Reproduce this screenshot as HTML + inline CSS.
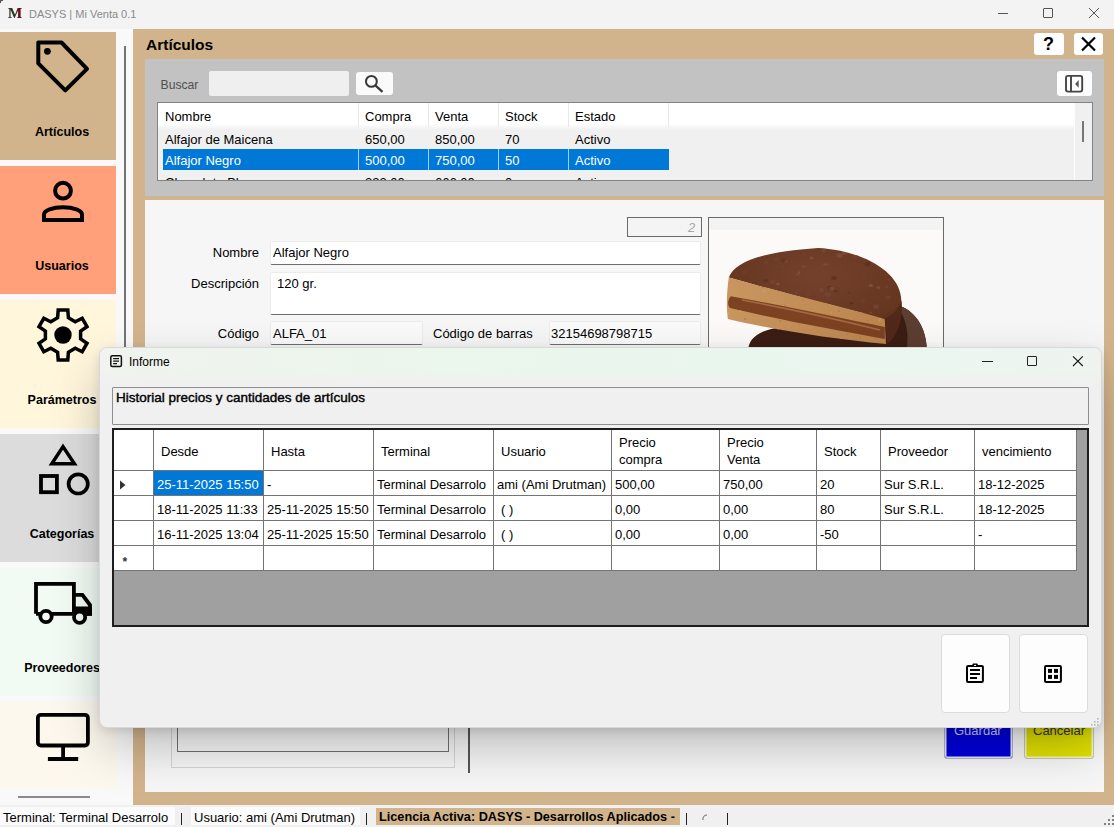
<!DOCTYPE html>
<html><head><meta charset="utf-8">
<style>
*{margin:0;padding:0;box-sizing:border-box}
html,body{width:1114px;height:827px;overflow:hidden;background:#f3f3f3;font-family:"Liberation Sans",sans-serif;font-size:13px;color:#000}
.a{position:absolute}
.t{position:absolute;white-space:nowrap;line-height:1}
.tile{position:absolute;left:0;width:116px;height:128px}
.tile .lbl{position:absolute;left:0;width:124px;text-align:center;top:93px;font-weight:bold;font-size:12.5px;white-space:nowrap}
.tile svg{position:absolute}
</style></head><body>
<div class="a" style="left:0;top:0;width:1114px;height:827px;overflow:hidden">

<!-- title bar -->
<div class="a" style="left:0;top:0;width:3px;height:3px;background:radial-gradient(circle at 100% 100%,#0000 2px,#555 2.5px);z-index:5"></div>
<div class="a" style="left:0;top:0;width:1114px;height:29px;background:#f3f3f3"></div>
<svg class="a" style="left:7px;top:6px" width="16" height="14" viewBox="7 6 16 14"><defs><linearGradient id="mg" x1="0" x2="1"><stop offset="0" stop-color="#4a3a38"/><stop offset="0.2" stop-color="#2a3a2a"/><stop offset="0.55" stop-color="#1c3a20"/><stop offset="0.6" stop-color="#6a1a22"/><stop offset="1" stop-color="#5a0f18"/></linearGradient></defs><path d="M8.3 8H12.2L15 14.8L17.6 8H21.6V8.7L20.6 9V16.9L21.6 17.3V18H17.2V17.3L18.1 16.9V10.6L14.6 18H14.1L10.6 9.8V16.9L11.6 17.3V18H8.3V17.3L9.3 16.9V9L8.3 8.7Z" fill="url(#mg)"/></svg>
<div class="t" style="left:29px;top:9px;font-size:11px;color:#8a8a8a">DASYS | Mi Venta 0.1</div>
<div class="a" style="left:998px;top:13px;width:10px;height:1px;background:#555"></div>
<div class="a" style="left:1043px;top:8px;width:10px;height:10px;border:1px solid #555;border-radius:1px"></div>
<svg class="a" style="left:1088px;top:7px" width="12" height="12" viewBox="0 0 12 12"><path d="M1 1L11 11M11 1L1 11" stroke="#555" stroke-width="1"/></svg>

<!-- sidebar -->
<div class="a" style="left:0;top:29px;width:133px;height:776px;background:#f9f9f9"></div>
<div class="tile" style="top:32px;background:#d2b48c">
  <div class="lbl">Artículos</div>
</div>
<div class="tile" style="top:166px;background:#ffa07a">
  <div class="lbl">Usuarios</div>
</div>
<div class="tile" style="top:300px;background:#fff6dc">
  <div class="lbl">Parámetros</div>
</div>
<div class="tile" style="top:434px;background:#dcdcdc">
  <div class="lbl">Categorías</div>
</div>
<div class="tile" style="top:568px;background:#f1fbf4">
  <div class="lbl">Proveedores</div>
</div>
<div class="tile" style="top:702px;height:86px;background:#fdf8ee">
</div>
<svg class="a" style="left:0;top:0" width="124" height="805" viewBox="0 0 124 805">
<g fill="none" stroke="#000" stroke-width="3.6">
 <path d="M38.3 42.5H61.5L87 68.8L65.3 90.4L38.3 63.4Z" stroke-linejoin="round" stroke-width="4"/>
 <circle cx="63" cy="190.7" r="7.9" stroke-width="4"/>
 <path d="M44 220V214.5A19 7.3 0 0 1 82 214.5V220Z" stroke-width="4"/>
 <path transform="translate(37 308)" d="M20.6 9.8 L21.2 2.1 L30.8 2.1 L31.4 9.8 L38.2 13.7 L45.2 10.3 L50.0 18.7 L43.6 23.1 L43.6 30.9 L50.0 35.3 L45.2 43.7 L38.2 40.3 L31.4 44.2 L30.8 51.9 L21.2 51.9 L20.6 44.2 L13.8 40.3 L6.8 43.7 L2.0 35.3 L8.4 30.9 L8.4 23.1 L2.0 18.7 L6.8 10.3 L13.8 13.7 Z" stroke-width="3.5" stroke-linejoin="miter"/>
 <path d="M63 446.6L51.8 463.8H74.4Z" stroke-width="3.5"/>
 <rect x="41" y="476" width="15.9" height="16.2" stroke-width="3.8"/>
 <circle cx="78.2" cy="483.9" r="9.6" stroke-width="3.7"/>
 <path d="M36 613.8V583.9H73.9V613.8M36 613.8H41M51 613.8H73.9" stroke-width="3.8"/>
 <path d="M73.9 594.8H82.4L90 605V613.8H86" stroke-width="3.8"/>
 <rect x="37.9" y="714.8" width="50" height="30.7" rx="3" stroke-width="3.8"/>
 <path d="M63.1 747V758M47.9 759H78.2" stroke-width="3.8"/>
</g>
<circle cx="47.4" cy="51.3" r="3.4"/>
<circle cx="63" cy="335" r="8.7"/>
<rect x="73.9" y="606.5" width="18" height="9.2"/>
<circle cx="46" cy="616.5" r="5.7" fill="#f1fbf4" stroke="#000" stroke-width="3.8"/>
<circle cx="79.6" cy="617.3" r="5.6" fill="#f1fbf4" stroke="#000" stroke-width="3.8"/>
</svg>
<div class="a" style="left:18px;top:796px;width:72px;height:2px;background:#8a8a8a"></div>
<div class="a" style="left:124px;top:46px;width:2px;height:660px;background:#747474"></div>

<!-- content panel -->
<div class="a" style="left:133px;top:29px;width:981px;height:776px;background:#d2b48c"></div>
<div class="t" style="left:146px;top:37px;font-size:15.5px;font-weight:bold">Artículos</div>
<div class="a" style="left:1034px;top:33px;width:30px;height:22px;background:#fff;border-radius:3px"></div>
<div class="t" style="left:1043px;top:35px;font-size:18px;font-weight:bold">?</div>
<div class="a" style="left:1074px;top:33px;width:29px;height:22px;background:#fff;border-radius:3px"></div>
<svg class="a" style="left:1080px;top:36px" width="17" height="16" viewBox="0 0 17 16"><path d="M2 1.5L15 14.5M15 1.5L2 14.5" stroke="#000" stroke-width="2.2"/></svg>

<!-- gray search panel -->
<div class="a" style="left:145px;top:59px;width:959px;height:137px;background:#c1c2c1"></div>
<div class="t" style="left:160.5px;top:79px;color:#505050;font-size:12.2px">Buscar</div>
<div class="a" style="left:209px;top:71px;width:140px;height:25px;background:#efefef;border-radius:2px"></div>
<div class="a" style="left:356px;top:72px;width:37px;height:23px;background:#fafafa;border-radius:3px"></div>
<svg class="a" style="left:356px;top:72px" width="37" height="23" viewBox="356 72 37 23"><circle cx="371.4" cy="81.4" r="5.4" fill="none" stroke="#383838" stroke-width="2"/><path d="M375.6 85.6L382.5 91.8" stroke="#383838" stroke-width="2.3"/></svg>
<div class="a" style="left:1057px;top:71px;width:35px;height:25px;background:#fcfcfc;border-radius:3px"></div>
<svg class="a" style="left:1057px;top:71px" width="35" height="25" viewBox="1057 71 35 25"><rect x="1066" y="75.9" width="16.2" height="15.7" rx="2" fill="none" stroke="#444" stroke-width="1.9"/><path d="M1071 76V91.6" stroke="#444" stroke-width="1.9"/><path d="M1075.1 83.9L1078.7 80V87.7Z" fill="#555"/></svg>

<!-- listview -->
<div class="a" style="left:157px;top:102px;width:936px;height:79px;background:#f0f0f0;border:1px solid #828282;overflow:hidden">
  <div class="a" style="left:0;top:0;width:917px;height:27px;background:linear-gradient(#fff 0,#fff 21px,#f0f0f0 27px)"></div>
  <div class="a" style="left:200px;top:0;width:1px;height:24px;background:#e8e8e8"></div>
  <div class="a" style="left:270px;top:0;width:1px;height:24px;background:#e8e8e8"></div>
  <div class="a" style="left:340px;top:0;width:1px;height:24px;background:#e8e8e8"></div>
  <div class="a" style="left:410px;top:0;width:1px;height:24px;background:#e8e8e8"></div>
  <div class="a" style="left:510px;top:0;width:1px;height:24px;background:#e8e8e8"></div>
  <div class="a" style="left:916px;top:0;width:1px;height:77px;background:#fff"></div>
  <div class="a" style="left:924px;top:18px;width:2px;height:21px;background:#777"></div>
  <div class="t" style="left:7px;top:7px">Nombre</div>
  <div class="t" style="left:207px;top:7px">Compra</div>
  <div class="t" style="left:277px;top:7px">Venta</div>
  <div class="t" style="left:347px;top:7px">Stock</div>
  <div class="t" style="left:417px;top:7px">Estado</div>
  <div class="t" style="left:7px;top:30px">Alfajor de Maicena</div>
  <div class="t" style="left:207px;top:30px">650,00</div>
  <div class="t" style="left:277px;top:30px">850,00</div>
  <div class="t" style="left:347px;top:30px">70</div>
  <div class="t" style="left:417px;top:30px">Activo</div>
  <div class="a" style="left:5px;top:46px;width:506px;height:21px;background:#0078d7"></div>
  <div class="a" style="left:200px;top:46px;width:1px;height:21px;background:#9fd0f5"></div>
  <div class="a" style="left:270px;top:46px;width:1px;height:21px;background:#9fd0f5"></div>
  <div class="a" style="left:340px;top:46px;width:1px;height:21px;background:#9fd0f5"></div>
  <div class="a" style="left:410px;top:46px;width:1px;height:21px;background:#9fd0f5"></div>
  <div class="t" style="left:7px;top:51px;color:#fff">Alfajor Negro</div>
  <div class="t" style="left:207px;top:51px;color:#fff">500,00</div>
  <div class="t" style="left:277px;top:51px;color:#fff">750,00</div>
  <div class="t" style="left:347px;top:51px;color:#fff">50</div>
  <div class="t" style="left:417px;top:51px;color:#fff">Activo</div>
  <div class="t" style="left:7px;top:73px">Chocolate Blanco</div>
  <div class="t" style="left:207px;top:73px">222,00</div>
  <div class="t" style="left:277px;top:73px">666,00</div>
  <div class="t" style="left:347px;top:73px">0</div>
  <div class="t" style="left:417px;top:73px">Activo</div>
</div>

<!-- detail panel -->
<div class="a" style="left:145px;top:200px;width:959px;height:592px;background:#f6f6f6"></div>
<div class="a" style="left:627px;top:217px;width:75px;height:20px;border:1px solid #6a6a6a;background:#f4f4f4"></div>
<div class="t" style="left:688px;top:221px;font-style:italic;color:#a8a8a8">2</div>
<div class="t" style="left:150px;top:246px;width:109px;text-align:right">Nombre</div>
<div class="a" style="left:270px;top:241px;width:431px;height:24px;background:#fff;border:1px solid #ececec;border-bottom:1px solid #6e6e6e;border-radius:2px"></div>
<div class="t" style="left:273px;top:246px">Alfajor Negro</div>
<div class="t" style="left:150px;top:277px;width:109px;text-align:right">Descripción</div>
<div class="a" style="left:270px;top:272px;width:431px;height:43px;background:#fff;border:1px solid #ececec;border-bottom:1px solid #6e6e6e;border-radius:2px"></div>
<div class="t" style="left:277px;top:277px">120 gr.</div>
<div class="t" style="left:150px;top:327px;width:109px;text-align:right">Código</div>
<div class="a" style="left:270px;top:321px;width:153px;height:24px;background:#fafafa;border:1px solid #ececec;border-bottom:1px solid #6e6e6e;border-radius:2px"></div>
<div class="t" style="left:273px;top:327px">ALFA_01</div>
<div class="t" style="left:433px;top:327px">Código de barras</div>
<div class="a" style="left:549px;top:321px;width:152px;height:24px;background:#fafafa;border:1px solid #ececec;border-bottom:1px solid #6e6e6e;border-radius:2px"></div>
<div class="t" style="left:551px;top:327px">32154698798715</div>
<div class="a" style="left:708px;top:217px;width:236px;height:140px;border:1px solid #6a6a6a;background:#f3f3f3;overflow:hidden">
  <div class="a" style="left:0;top:12px;width:234px;height:130px;background:#fcfaf8"></div>
  <svg class="a" style="left:-709px;top:-218px" width="1114" height="400" viewBox="0 0 1114 400">
    <defs>
      <radialGradient id="choc" cx="0.5" cy="0.3" r="0.75"><stop offset="0" stop-color="#74412d"/><stop offset="0.75" stop-color="#66361f"/><stop offset="1" stop-color="#4a2416"/></radialGradient>
      <linearGradient id="cook" x1="0" y1="0" x2="1" y2="0"><stop offset="0" stop-color="#c99660"/><stop offset="1" stop-color="#bb844e"/></linearGradient>
      <clipPath id="domeclip"><path d="M728.8 277.5C735 262 760 252 818 248C860 250 898 270 901 297C903 315 898 332 887 340L884.8 319C860 312 800 298 728.8 277.5Z"/></clipPath>
      <clipPath id="cookclip"><path d="M728.8 277.5C780 292 835 305 884.8 319L886 344C830 339 770 329 727.8 319C726 305 727 290 728.8 277.5Z"/></clipPath>
    </defs>
    <path d="M748 352C748 336 762 328 792 326L900 306C917 312 927 330 927 352Z" fill="#3c1d13"/>
    <path d="M900 306C917 312 927 330 927 352L906 352C910 335 906 318 898 308Z" fill="#5c3e32"/>
    <path d="M728.8 277.5C735 262 760 252 818 248C860 250 898 270 901 297C903 315 898 332 887 340L884.8 319C860 312 800 298 728.8 277.5Z" fill="url(#choc)"/>
    <g clip-path="url(#domeclip)"><ellipse cx="785.7" cy="261.1" rx="2.4" ry="1.7" fill="#8c5a44" opacity="0.41"/><ellipse cx="746.2" cy="298.7" rx="3.0" ry="2.1" fill="#7c4a34" opacity="0.21"/><ellipse cx="804.6" cy="254.1" rx="1.2" ry="0.8" fill="#9a6a52" opacity="0.21"/><ellipse cx="827.3" cy="330.4" rx="2.4" ry="1.7" fill="#8c5a44" opacity="0.34"/><ellipse cx="798.2" cy="332.9" rx="1.1" ry="0.8" fill="#7c4a34" opacity="0.27"/><ellipse cx="754.8" cy="258.2" rx="1.7" ry="1.2" fill="#7c4a34" opacity="0.23"/><ellipse cx="828.2" cy="264.3" rx="1.2" ry="0.9" fill="#8c5a44" opacity="0.34"/><ellipse cx="836.5" cy="291.2" rx="2.2" ry="1.5" fill="#4e2418" opacity="0.32"/><ellipse cx="888.8" cy="279.5" rx="1.5" ry="1.1" fill="#7c4a34" opacity="0.37"/><ellipse cx="772.0" cy="298.0" rx="2.2" ry="1.5" fill="#4e2418" opacity="0.38"/><ellipse cx="779.5" cy="333.3" rx="1.3" ry="0.9" fill="#9a6a52" opacity="0.24"/><ellipse cx="788.8" cy="329.2" rx="1.9" ry="1.3" fill="#8c5a44" opacity="0.39"/><ellipse cx="828.6" cy="324.2" rx="1.7" ry="1.2" fill="#4e2418" opacity="0.35"/><ellipse cx="829.7" cy="287.7" rx="2.8" ry="2.0" fill="#4e2418" opacity="0.32"/><ellipse cx="844.2" cy="253.3" rx="2.5" ry="1.8" fill="#9a6a52" opacity="0.27"/><ellipse cx="796.4" cy="306.2" rx="1.0" ry="0.7" fill="#9a6a52" opacity="0.29"/><ellipse cx="835.1" cy="291.0" rx="1.5" ry="1.0" fill="#4e2418" opacity="0.23"/><ellipse cx="772.6" cy="282.0" rx="2.9" ry="2.0" fill="#8c5a44" opacity="0.24"/><ellipse cx="799.1" cy="272.2" rx="1.3" ry="0.9" fill="#9a6a52" opacity="0.42"/><ellipse cx="777.9" cy="284.1" rx="1.8" ry="1.3" fill="#9a6a52" opacity="0.44"/><ellipse cx="756.0" cy="263.3" rx="1.5" ry="1.1" fill="#7c4a34" opacity="0.20"/><ellipse cx="872.9" cy="263.9" rx="1.6" ry="1.1" fill="#7c4a34" opacity="0.30"/><ellipse cx="793.5" cy="297.3" rx="3.1" ry="2.2" fill="#8c5a44" opacity="0.31"/><ellipse cx="879.8" cy="330.8" rx="2.5" ry="1.7" fill="#9a6a52" opacity="0.30"/><ellipse cx="797.8" cy="289.9" rx="1.9" ry="1.3" fill="#7c4a34" opacity="0.22"/><ellipse cx="765.9" cy="262.1" rx="1.7" ry="1.2" fill="#8c5a44" opacity="0.23"/><ellipse cx="827.5" cy="294.7" rx="3.1" ry="2.2" fill="#8c5a44" opacity="0.22"/><ellipse cx="765.8" cy="280.7" rx="2.4" ry="1.7" fill="#4e2418" opacity="0.35"/><ellipse cx="811.6" cy="258.0" rx="2.1" ry="1.5" fill="#9a6a52" opacity="0.32"/><ellipse cx="783.6" cy="260.5" rx="2.6" ry="1.9" fill="#4e2418" opacity="0.32"/><ellipse cx="849.0" cy="292.9" rx="1.5" ry="1.0" fill="#4e2418" opacity="0.24"/><ellipse cx="823.4" cy="250.4" rx="2.2" ry="1.5" fill="#8c5a44" opacity="0.37"/><ellipse cx="774.9" cy="279.9" rx="1.4" ry="1.0" fill="#7c4a34" opacity="0.33"/><ellipse cx="864.0" cy="276.7" rx="1.5" ry="1.0" fill="#7c4a34" opacity="0.40"/><ellipse cx="870.8" cy="312.4" rx="1.5" ry="1.0" fill="#9a6a52" opacity="0.29"/><ellipse cx="735.0" cy="250.4" rx="1.6" ry="1.1" fill="#4e2418" opacity="0.25"/><ellipse cx="834.1" cy="278.0" rx="2.8" ry="1.9" fill="#4e2418" opacity="0.44"/><ellipse cx="792.7" cy="267.2" rx="1.5" ry="1.0" fill="#7c4a34" opacity="0.28"/><ellipse cx="813.0" cy="333.7" rx="2.3" ry="1.6" fill="#8c5a44" opacity="0.32"/><ellipse cx="842.3" cy="317.6" rx="1.2" ry="0.8" fill="#8c5a44" opacity="0.43"/><ellipse cx="864.6" cy="313.3" rx="2.1" ry="1.4" fill="#7c4a34" opacity="0.31"/><ellipse cx="839.4" cy="255.5" rx="3.1" ry="2.2" fill="#9a6a52" opacity="0.32"/><ellipse cx="857.9" cy="255.4" rx="1.3" ry="0.9" fill="#7c4a34" opacity="0.21"/><ellipse cx="831.6" cy="288.5" rx="2.4" ry="1.7" fill="#9a6a52" opacity="0.36"/><ellipse cx="790.3" cy="295.7" rx="1.3" ry="0.9" fill="#8c5a44" opacity="0.40"/><ellipse cx="854.9" cy="256.9" rx="2.6" ry="1.9" fill="#7c4a34" opacity="0.31"/><ellipse cx="879.9" cy="319.9" rx="1.5" ry="1.0" fill="#4e2418" opacity="0.25"/><ellipse cx="816.2" cy="314.4" rx="1.7" ry="1.2" fill="#9a6a52" opacity="0.41"/><ellipse cx="740.5" cy="312.4" rx="3.0" ry="2.1" fill="#9a6a52" opacity="0.41"/><ellipse cx="881.0" cy="259.4" rx="1.3" ry="0.9" fill="#8c5a44" opacity="0.42"/><ellipse cx="863.6" cy="300.9" rx="2.7" ry="1.9" fill="#7c4a34" opacity="0.24"/><ellipse cx="811.4" cy="311.1" rx="2.2" ry="1.6" fill="#4e2418" opacity="0.37"/><ellipse cx="821.3" cy="290.0" rx="2.7" ry="1.9" fill="#8c5a44" opacity="0.26"/><ellipse cx="777.6" cy="315.2" rx="2.1" ry="1.5" fill="#8c5a44" opacity="0.39"/><ellipse cx="886.9" cy="286.6" rx="2.3" ry="1.6" fill="#7c4a34" opacity="0.37"/><ellipse cx="807.8" cy="294.4" rx="2.1" ry="1.4" fill="#7c4a34" opacity="0.37"/><ellipse cx="880.8" cy="330.0" rx="1.6" ry="1.1" fill="#7c4a34" opacity="0.41"/><ellipse cx="753.6" cy="258.6" rx="2.0" ry="1.4" fill="#8c5a44" opacity="0.37"/><ellipse cx="803.7" cy="266.5" rx="1.7" ry="1.2" fill="#8c5a44" opacity="0.42"/><ellipse cx="756.6" cy="310.3" rx="2.5" ry="1.7" fill="#7c4a34" opacity="0.26"/><ellipse cx="753.6" cy="288.7" rx="2.6" ry="1.8" fill="#8c5a44" opacity="0.30"/><ellipse cx="813.8" cy="334.1" rx="2.8" ry="2.0" fill="#7c4a34" opacity="0.38"/><ellipse cx="901.0" cy="283.1" rx="1.9" ry="1.3" fill="#4e2418" opacity="0.28"/><ellipse cx="854.2" cy="249.7" rx="2.2" ry="1.6" fill="#9a6a52" opacity="0.38"/><ellipse cx="796.1" cy="293.0" rx="1.6" ry="1.2" fill="#8c5a44" opacity="0.23"/><ellipse cx="888.0" cy="267.9" rx="2.9" ry="2.0" fill="#8c5a44" opacity="0.27"/><ellipse cx="736.8" cy="315.8" rx="1.6" ry="1.1" fill="#7c4a34" opacity="0.40"/><ellipse cx="876.1" cy="306.8" rx="3.1" ry="2.2" fill="#9a6a52" opacity="0.24"/><ellipse cx="888.1" cy="297.6" rx="2.5" ry="1.8" fill="#8c5a44" opacity="0.27"/><ellipse cx="867.5" cy="264.0" rx="3.0" ry="2.1" fill="#4e2418" opacity="0.43"/><ellipse cx="839.1" cy="317.7" rx="1.2" ry="0.8" fill="#7c4a34" opacity="0.22"/><ellipse cx="878.4" cy="287.5" rx="1.7" ry="1.2" fill="#9a6a52" opacity="0.43"/><ellipse cx="776.1" cy="259.2" rx="2.2" ry="1.5" fill="#7c4a34" opacity="0.43"/><ellipse cx="896.7" cy="270.8" rx="1.4" ry="1.0" fill="#4e2418" opacity="0.36"/><ellipse cx="821.3" cy="265.9" rx="2.0" ry="1.4" fill="#7c4a34" opacity="0.27"/><ellipse cx="868.2" cy="334.5" rx="1.1" ry="0.8" fill="#8c5a44" opacity="0.38"/><ellipse cx="824.8" cy="264.5" rx="2.0" ry="1.4" fill="#9a6a52" opacity="0.23"/><ellipse cx="870.9" cy="285.6" rx="2.1" ry="1.5" fill="#9a6a52" opacity="0.44"/><ellipse cx="782.9" cy="266.7" rx="1.5" ry="1.1" fill="#7c4a34" opacity="0.41"/><ellipse cx="851.6" cy="303.3" rx="1.9" ry="1.3" fill="#4e2418" opacity="0.45"/><ellipse cx="874.0" cy="249.2" rx="2.4" ry="1.7" fill="#4e2418" opacity="0.31"/><ellipse cx="739.5" cy="305.9" rx="1.8" ry="1.3" fill="#4e2418" opacity="0.35"/><ellipse cx="849.1" cy="251.9" rx="1.4" ry="1.0" fill="#4e2418" opacity="0.31"/><ellipse cx="775.3" cy="331.7" rx="3.1" ry="2.2" fill="#4e2418" opacity="0.26"/><ellipse cx="896.1" cy="274.9" rx="1.8" ry="1.2" fill="#8c5a44" opacity="0.28"/><ellipse cx="744.4" cy="272.3" rx="2.4" ry="1.7" fill="#7c4a34" opacity="0.33"/><ellipse cx="730.9" cy="271.0" rx="1.2" ry="0.8" fill="#9a6a52" opacity="0.35"/><ellipse cx="797.8" cy="274.1" rx="2.4" ry="1.7" fill="#8c5a44" opacity="0.35"/><ellipse cx="821.0" cy="313.3" rx="2.4" ry="1.7" fill="#9a6a52" opacity="0.39"/><ellipse cx="854.0" cy="291.0" rx="1.6" ry="1.1" fill="#7c4a34" opacity="0.21"/></g>
    <path d="M728.8 277.5C780 292 835 305 884.8 319L886 344C830 339 770 329 727.8 319C726 305 727 290 728.8 277.5Z" fill="url(#cook)"/>
    <g clip-path="url(#cookclip)"><circle cx="860.0" cy="337.5" r="0.9" fill="#a87440" opacity="0.55"/><circle cx="838.8" cy="310.9" r="1.1" fill="#a87440" opacity="0.55"/><circle cx="817.8" cy="332.1" r="0.5" fill="#a87440" opacity="0.55"/><circle cx="820.3" cy="337.6" r="1.0" fill="#a87440" opacity="0.55"/><circle cx="829.6" cy="281.9" r="0.5" fill="#a87440" opacity="0.55"/><circle cx="785.0" cy="283.2" r="1.1" fill="#a87440" opacity="0.55"/><circle cx="736.0" cy="277.3" r="0.9" fill="#9a6634" opacity="0.55"/><circle cx="805.3" cy="276.2" r="1.1" fill="#a87440" opacity="0.55"/><circle cx="875.3" cy="338.0" r="0.6" fill="#a87440" opacity="0.55"/><circle cx="738.4" cy="326.8" r="0.7" fill="#9a6634" opacity="0.55"/><circle cx="861.7" cy="292.2" r="1.0" fill="#9a6634" opacity="0.55"/><circle cx="844.9" cy="343.3" r="0.8" fill="#d8a872" opacity="0.55"/><circle cx="740.1" cy="338.8" r="0.7" fill="#9a6634" opacity="0.55"/><circle cx="825.5" cy="320.4" r="0.6" fill="#9a6634" opacity="0.55"/><circle cx="780.4" cy="321.0" r="1.0" fill="#a87440" opacity="0.55"/><circle cx="817.7" cy="276.9" r="0.5" fill="#d8a872" opacity="0.55"/><circle cx="881.7" cy="282.9" r="0.7" fill="#d8a872" opacity="0.55"/><circle cx="774.0" cy="311.6" r="0.8" fill="#d8a872" opacity="0.55"/><circle cx="849.2" cy="344.5" r="0.9" fill="#d8a872" opacity="0.55"/><circle cx="882.5" cy="340.6" r="0.5" fill="#d8a872" opacity="0.55"/><circle cx="740.1" cy="311.0" r="1.2" fill="#d8a872" opacity="0.55"/><circle cx="789.1" cy="339.2" r="1.2" fill="#9a6634" opacity="0.55"/><circle cx="819.9" cy="285.8" r="0.9" fill="#d8a872" opacity="0.55"/><circle cx="749.0" cy="332.6" r="0.9" fill="#9a6634" opacity="0.55"/><circle cx="839.1" cy="292.0" r="1.1" fill="#d8a872" opacity="0.55"/><circle cx="790.3" cy="287.0" r="1.2" fill="#a87440" opacity="0.55"/><circle cx="799.2" cy="296.8" r="0.6" fill="#d8a872" opacity="0.55"/><circle cx="787.4" cy="284.3" r="0.7" fill="#d8a872" opacity="0.55"/><circle cx="846.6" cy="333.9" r="0.6" fill="#9a6634" opacity="0.55"/><circle cx="840.7" cy="338.2" r="0.7" fill="#d8a872" opacity="0.55"/><circle cx="738.3" cy="302.9" r="1.1" fill="#9a6634" opacity="0.55"/><circle cx="785.0" cy="305.5" r="0.7" fill="#9a6634" opacity="0.55"/><circle cx="772.3" cy="279.6" r="1.0" fill="#a87440" opacity="0.55"/><circle cx="875.8" cy="293.2" r="0.7" fill="#a87440" opacity="0.55"/><circle cx="777.9" cy="329.3" r="1.0" fill="#d8a872" opacity="0.55"/><circle cx="867.7" cy="332.0" r="0.9" fill="#a87440" opacity="0.55"/><circle cx="814.8" cy="325.7" r="0.5" fill="#a87440" opacity="0.55"/><circle cx="792.9" cy="318.4" r="0.6" fill="#d8a872" opacity="0.55"/><circle cx="804.7" cy="338.9" r="0.9" fill="#9a6634" opacity="0.55"/><circle cx="802.6" cy="299.7" r="0.7" fill="#a87440" opacity="0.55"/><circle cx="844.7" cy="321.0" r="0.8" fill="#9a6634" opacity="0.55"/><circle cx="775.5" cy="314.5" r="0.8" fill="#9a6634" opacity="0.55"/><circle cx="829.6" cy="281.2" r="0.9" fill="#d8a872" opacity="0.55"/><circle cx="815.0" cy="307.3" r="0.7" fill="#d8a872" opacity="0.55"/><circle cx="795.5" cy="313.8" r="0.7" fill="#9a6634" opacity="0.55"/><circle cx="782.0" cy="282.3" r="0.7" fill="#d8a872" opacity="0.55"/><circle cx="855.9" cy="289.9" r="0.5" fill="#d8a872" opacity="0.55"/><circle cx="788.5" cy="327.5" r="0.6" fill="#d8a872" opacity="0.55"/><circle cx="781.4" cy="280.3" r="0.7" fill="#d8a872" opacity="0.55"/><circle cx="747.9" cy="310.7" r="0.9" fill="#9a6634" opacity="0.55"/><circle cx="742.6" cy="337.9" r="0.8" fill="#a87440" opacity="0.55"/><circle cx="798.4" cy="341.8" r="1.1" fill="#9a6634" opacity="0.55"/><circle cx="748.1" cy="305.3" r="1.0" fill="#d8a872" opacity="0.55"/><circle cx="881.0" cy="309.8" r="0.6" fill="#a87440" opacity="0.55"/><circle cx="863.2" cy="343.1" r="0.7" fill="#9a6634" opacity="0.55"/><circle cx="763.4" cy="286.5" r="1.2" fill="#9a6634" opacity="0.55"/><circle cx="876.8" cy="325.8" r="1.0" fill="#d8a872" opacity="0.55"/><circle cx="741.4" cy="329.6" r="0.5" fill="#9a6634" opacity="0.55"/><circle cx="764.7" cy="339.5" r="1.0" fill="#d8a872" opacity="0.55"/><circle cx="880.1" cy="319.2" r="0.9" fill="#d8a872" opacity="0.55"/><circle cx="838.4" cy="283.7" r="0.5" fill="#a87440" opacity="0.55"/><circle cx="877.1" cy="289.2" r="0.7" fill="#a87440" opacity="0.55"/><circle cx="728.2" cy="313.1" r="1.2" fill="#d8a872" opacity="0.55"/><circle cx="879.5" cy="320.5" r="1.1" fill="#d8a872" opacity="0.55"/><circle cx="811.2" cy="313.7" r="0.5" fill="#d8a872" opacity="0.55"/><circle cx="839.3" cy="297.2" r="0.5" fill="#d8a872" opacity="0.55"/><circle cx="867.8" cy="320.7" r="0.6" fill="#9a6634" opacity="0.55"/><circle cx="833.4" cy="339.8" r="0.7" fill="#9a6634" opacity="0.55"/><circle cx="837.9" cy="325.6" r="0.8" fill="#d8a872" opacity="0.55"/><circle cx="759.3" cy="331.0" r="1.0" fill="#a87440" opacity="0.55"/><circle cx="738.7" cy="310.2" r="0.6" fill="#9a6634" opacity="0.55"/><circle cx="764.5" cy="291.3" r="1.0" fill="#d8a872" opacity="0.55"/><circle cx="745.2" cy="319.0" r="0.9" fill="#9a6634" opacity="0.55"/><circle cx="804.6" cy="338.8" r="0.5" fill="#a87440" opacity="0.55"/><circle cx="751.1" cy="303.1" r="0.6" fill="#a87440" opacity="0.55"/><circle cx="750.4" cy="279.6" r="0.5" fill="#d8a872" opacity="0.55"/><circle cx="799.0" cy="325.1" r="0.7" fill="#9a6634" opacity="0.55"/><circle cx="885.6" cy="340.3" r="0.7" fill="#9a6634" opacity="0.55"/><circle cx="831.1" cy="312.2" r="0.8" fill="#d8a872" opacity="0.55"/><circle cx="833.0" cy="302.1" r="0.8" fill="#d8a872" opacity="0.55"/></g>
    <path d="M730.8 296.3C780 305 840 318 884.8 327L884.8 339C840 331 780 320 730 308.1C727 305 728 299 730.8 296.3Z" fill="#7c4222"/>
    <path d="M742 300C790 309 840 320 880 330" fill="none" stroke="#b57a50" stroke-width="1.6" opacity="0.7"/>
    <path d="M884.8 319C893 315 900 308 901.6 300C903 320 898 336 887 344Z" fill="#52281a"/>
  </svg>
</div>
<div class="a" style="left:171px;top:700px;width:284px;height:68px;border:1px solid #d4d4d4"></div>
<div class="a" style="left:177px;top:700px;width:272px;height:52px;border:1px solid #707070"></div>
<div class="a" style="left:468px;top:700px;width:2px;height:73px;background:#555"></div>
<div class="a" style="left:944px;top:700px;width:69px;height:59px;background:#0000dc;border:1px solid #b4b4c4;box-shadow:inset 0 0 0 1.5px #e4e4ff;border-radius:3px"></div>
<div class="t" style="left:954px;top:724px;color:#c8c8ff">Guardar</div>
<div class="a" style="left:1024px;top:700px;width:70px;height:59px;background:linear-gradient(#d4d400,#e2e200);border:1px solid #c4c4b0;box-shadow:inset 0 0 0 1.5px #f4f4d0;border-radius:3px"></div>
<div class="t" style="left:1033px;top:724px;color:#333">Cancelar</div>

<!-- dialog -->
<div class="a" style="left:99px;top:347px;width:1003px;height:381px;background:#f0f0f0;border-radius:8px;box-shadow:0 20px 52px -6px rgba(0,0,0,0.28),0 3px 10px rgba(0,0,0,0.10);border:1px solid #d8d8d8;overflow:hidden">
  <div class="a" style="left:0;top:0;width:1003px;height:34px;background:linear-gradient(#0000 70%,#f0f0f0),linear-gradient(90deg,#f0f3ee,#ebf6ec 35%,#e9f6ee 65%,#ecf6f0 85%,#eef3ef)"></div>
</div>
<svg class="a" style="left:109px;top:354px" width="14" height="14" viewBox="0 0 14 14"><rect x="1.8" y="1.8" width="10.6" height="10.8" rx="1.5" fill="none" stroke="#111" stroke-width="1.5"/><path d="M4.2 4.6H10M4.2 7.1H10M4.2 9.6H8" stroke="#111" stroke-width="1.3"/></svg>
<div class="t" style="left:129px;top:356px;font-size:12px">Informe</div>
<div class="a" style="left:982px;top:361px;width:11px;height:1px;background:#222"></div>
<div class="a" style="left:1027px;top:356px;width:10px;height:10px;border:1px solid #222;border-radius:1px"></div>
<svg class="a" style="left:1072px;top:355px" width="12" height="12" viewBox="0 0 12 12"><path d="M1 1.3L10.8 11M10.8 1.3L1 11" stroke="#1a1a1a" stroke-width="1.15"/></svg>
<div class="a" style="left:112px;top:387px;width:977px;height:38px;border:1px solid #8e8e8e;border-radius:1px"></div>
<div class="t" style="left:116px;top:390.5px;font-size:13.5px;-webkit-text-stroke:0.4px #000">Historial precios y cantidades de artículos</div>
<div class="a" style="left:112px;top:428px;width:977px;height:199px;background:#a0a0a0;border:2px solid #1e1e1e"></div>
<!--grid-->
<div class="a" style="left:114px;top:430px;width:963px;height:141px;background:#fff"></div>
<div class="a" style="left:153px;top:430px;width:1px;height:141px;background:#747474"></div>
<div class="a" style="left:263px;top:430px;width:1px;height:141px;background:#747474"></div>
<div class="a" style="left:373px;top:430px;width:1px;height:141px;background:#747474"></div>
<div class="a" style="left:493px;top:430px;width:1px;height:141px;background:#747474"></div>
<div class="a" style="left:611px;top:430px;width:1px;height:141px;background:#747474"></div>
<div class="a" style="left:719px;top:430px;width:1px;height:141px;background:#747474"></div>
<div class="a" style="left:816px;top:430px;width:1px;height:141px;background:#747474"></div>
<div class="a" style="left:880px;top:430px;width:1px;height:141px;background:#747474"></div>
<div class="a" style="left:974px;top:430px;width:1px;height:141px;background:#747474"></div>
<div class="a" style="left:1076px;top:430px;width:1px;height:141px;background:#747474"></div>
<div class="a" style="left:114px;top:470px;width:963px;height:1px;background:#747474"></div>
<div class="a" style="left:114px;top:495px;width:963px;height:1px;background:#747474"></div>
<div class="a" style="left:114px;top:520px;width:963px;height:1px;background:#747474"></div>
<div class="a" style="left:114px;top:545px;width:963px;height:1px;background:#747474"></div>
<div class="a" style="left:114px;top:570px;width:963px;height:1px;background:#747474"></div>
<div class="a" style="left:154px;top:471px;width:109px;height:24px;background:#0078d7"></div>
<div class="t" style="left:161px;top:445px">Desde</div>
<div class="t" style="left:271px;top:445px">Hasta</div>
<div class="t" style="left:381px;top:445px">Terminal</div>
<div class="t" style="left:501px;top:445px">Usuario</div>
<div class="t" style="left:824px;top:445px">Stock</div>
<div class="t" style="left:888px;top:445px">Proveedor</div>
<div class="t" style="left:982px;top:445px">vencimiento</div>
<div class="t" style="left:619px;top:434px;line-height:17px">Precio<br>compra</div>
<div class="t" style="left:727px;top:434px;line-height:17px">Precio<br>Venta</div>
<div class="t" style="left:157px;top:478px;color:#fff">25-11-2025 15:50</div>
<div class="t" style="left:267px;top:478px;color:#000">-</div>
<div class="t" style="left:377px;top:478px;color:#000">Terminal Desarrolo</div>
<div class="t" style="left:497px;top:478px;color:#000">ami (Ami Drutman)</div>
<div class="t" style="left:615px;top:478px;color:#000">500,00</div>
<div class="t" style="left:723px;top:478px;color:#000">750,00</div>
<div class="t" style="left:820px;top:478px;color:#000">20</div>
<div class="t" style="left:884px;top:478px;color:#000">Sur S.R.L.</div>
<div class="t" style="left:978px;top:478px;color:#000">18-12-2025</div>
<div class="t" style="left:157px;top:503px;color:#000">18-11-2025 11:33</div>
<div class="t" style="left:267px;top:503px;color:#000">25-11-2025 15:50</div>
<div class="t" style="left:377px;top:503px;color:#000">Terminal Desarrolo</div>
<div class="t" style="left:501px;top:503px;color:#000">( )</div>
<div class="t" style="left:615px;top:503px;color:#000">0,00</div>
<div class="t" style="left:723px;top:503px;color:#000">0,00</div>
<div class="t" style="left:820px;top:503px;color:#000">80</div>
<div class="t" style="left:884px;top:503px;color:#000">Sur S.R.L.</div>
<div class="t" style="left:978px;top:503px;color:#000">18-12-2025</div>
<div class="t" style="left:157px;top:528px;color:#000">16-11-2025 13:04</div>
<div class="t" style="left:267px;top:528px;color:#000">25-11-2025 15:50</div>
<div class="t" style="left:377px;top:528px;color:#000">Terminal Desarrolo</div>
<div class="t" style="left:501px;top:528px;color:#000">( )</div>
<div class="t" style="left:615px;top:528px;color:#000">0,00</div>
<div class="t" style="left:723px;top:528px;color:#000">0,00</div>
<div class="t" style="left:820px;top:528px;color:#000">-50</div>
<div class="t" style="left:978px;top:528px;color:#000">-</div>
<svg class="a" style="left:120px;top:480px" width="6" height="10" viewBox="0 0 6 10"><path d="M0 0.5L5.5 5L0 9.5Z" fill="#333"/></svg>
<div class="t" style="left:122.5px;top:556px;font-size:12px;font-weight:bold;color:#333">*</div>
<!--/grid-->
<div class="a" style="left:941px;top:634px;width:69px;height:79px;background:#fdfdfd;border:1px solid #dcdcdc;border-radius:4px"></div>
<div class="a" style="left:1019px;top:634px;width:69px;height:79px;background:#fdfdfd;border:1px solid #dcdcdc;border-radius:4px"></div>
<svg class="a" style="left:960px;top:658px" width="110" height="30" viewBox="960 658 110 30">
<rect x="967" y="665.9" width="15.9" height="16.1" rx="1" fill="none" stroke="#000" stroke-width="2"/>
<path d="M971.5 666.2L973 663.6H977.2L978.7 666.2Z" fill="#000"/><ellipse cx="975.1" cy="665.4" rx="1.1" ry="0.6" fill="#fff"/>
<path d="M970 669.9H980M970 673.9H980M970 677.9H977" stroke="#000" stroke-width="2"/>
<rect x="1045" y="665.9" width="15.9" height="16.1" rx="1" fill="none" stroke="#000" stroke-width="2"/>
<rect x="1048" y="668.9" width="4" height="4"/><rect x="1054" y="668.9" width="4" height="4"/><rect x="1048" y="674.9" width="4" height="4"/><rect x="1054" y="674.9" width="4" height="4"/>
</svg>

<svg class="a" style="left:1088px;top:714px" width="14" height="14" viewBox="1088 714 14 14" fill="#b8b8b8"><rect x="1097" y="718" width="1.6" height="1.6"/><rect x="1094" y="721" width="1.6" height="1.6"/><rect x="1097" y="721" width="1.6" height="1.6"/><rect x="1091" y="724" width="1.6" height="1.6"/><rect x="1094" y="724" width="1.6" height="1.6"/><rect x="1097" y="724" width="1.6" height="1.6"/></svg>
<!-- status bar -->
<div class="a" style="left:0;top:805px;width:1114px;height:22px;background:#f0f0f0"></div>
<div class="a" style="left:0;top:807px;width:175px;height:18px;background:#fbfbfb"></div>
<div class="t" style="left:3px;top:811px">Terminal: Terminal Desarrolo</div>
<div class="a" style="left:181px;top:813px;width:1px;height:12px;background:#222"></div>
<div class="a" style="left:191px;top:807px;width:169px;height:18px;background:#fbfbfb"></div>
<div class="t" style="left:194px;top:811px">Usuario: ami (Ami Drutman)</div>
<div class="a" style="left:366px;top:813px;width:1px;height:12px;background:#222"></div>
<div class="a" style="left:376px;top:808px;width:304px;height:17px;background:#d2b48c"></div>
<div class="t" style="left:379px;top:811px;font-weight:bold;font-size:12.7px">Licencia Activa: DASYS - Desarrollos Aplicados -</div>
<div class="a" style="left:686px;top:813px;width:1px;height:12px;background:#222"></div>
<svg class="a" style="left:700px;top:812px" width="10" height="10" viewBox="0 0 10 10"><path d="M3 8A4 4 0 0 1 7 3" fill="none" stroke="#666" stroke-width="1"/></svg>
<div class="a" style="left:727px;top:813px;width:1px;height:12px;background:#222"></div>
<svg class="a" style="left:1100px;top:812px" width="14" height="15" viewBox="1100 812 14 15" fill="#808080"><rect x="1112" y="815" width="2" height="2"/><rect x="1108" y="819" width="2" height="2"/><rect x="1112" y="819" width="2" height="2"/><rect x="1104" y="823" width="2" height="2"/><rect x="1108" y="823" width="2" height="2"/><rect x="1112" y="823" width="2" height="2"/></svg>
</div>
</body></html>
